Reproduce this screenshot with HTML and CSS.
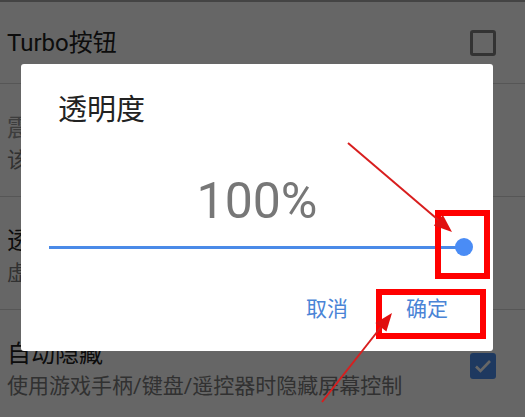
FILE: index.html
```html
<!DOCTYPE html>
<html lang="zh">
<head>
  <meta charset="UTF-8" />
  <title>透明度</title>
  <link rel="stylesheet" href="styles.css">
</head>
<body>
  <div class="settings">
    <div class="row row-single">
      <div class="row-text">
        <div class="row-title">Turbo按钮</div>
      </div>
      <span class="checkbox"></span>
    </div>
    <div class="row">
      <div class="row-text">
        <div class="row-title disabled">震动</div>
        <div class="row-summary">该功能需要设备支持震动</div>
      </div>
    </div>
    <div class="row">
      <div class="row-text">
        <div class="row-title">透明度</div>
        <div class="row-summary">虚拟按键的透明度</div>
      </div>
    </div>
    <div class="row">
      <div class="row-text">
        <div class="row-title">自动隐藏</div>
        <div class="row-summary">使用游戏手柄/键盘/遥控器时隐藏屏幕控制</div>
      </div>
      <span class="checkbox checked">
        <svg width="18" height="14" viewBox="0 0 18 14"><path d="M2 7.5l4.5 4.5L16 2" fill="none" stroke="#fff" stroke-width="2.6"/></svg>
      </span>
    </div>
  </div>

  <!-- 对话框 -->
  <div class="overlay">
    <div class="dialog">
      <div class="dialog-title">透明度</div>
      <div class="dialog-value">100%</div>
      <div class="slider">
        <div class="slider-track"></div>
        <div class="slider-thumb"></div>
      </div>
      <div class="dialog-actions">
        <span class="btn">取消</span>
        <span class="btn">确定</span>
      </div>
    </div>
  </div>

  <!-- 标注 -->
  <div class="mark mark-thumb"></div>
  <div class="mark mark-ok"></div>
  <svg class="arrows" width="525" height="417" viewBox="0 0 525 417">
    <line x1="348" y1="143" x2="443" y2="224" stroke="#d81e1e" stroke-width="2"/>
    <polygon points="452,232 433.8,225.6 442.9,215" fill="#e01010"/>
    <line x1="322" y1="402" x2="385" y2="322" stroke="#d81e1e" stroke-width="2"/>
    <polygon points="392,313 386.4,331.5 375.4,322.9" fill="#e01010"/>
  </svg>
</body>
</html>
```

FILE: styles.css
```css
body {
  margin: 0;
  font-family: Roboto, "Noto Sans CJK SC", sans-serif;
  background: #fff;
  overflow: hidden;
  height: 417px;
}

.settings {
  border-top: 2px solid #aaa;
}

.row {
  display: flex;
  align-items: center;
  height: 113px;
  box-sizing: border-box;
  padding: 0 29px 0 7px;
  border-bottom: 1px solid #d8d8d8;
}

.row-single {
  height: 82px;
}

.row-text {
  flex: 1;
  align-self: flex-start;
  padding-top: 28px;
}

.row-single .row-text {
  align-self: center;
  padding-top: 0;
}

.row-title {
  font-size: 24px;
  line-height: 32px;
  color: #222;
}

.row-title.disabled {
  color: #999;
}

.row-summary {
  margin-top: 3px;
  font-size: 21px;
  line-height: 27px;
  color: #7a7a7a;
}

.checkbox {
  width: 26px;
  height: 26px;
  box-sizing: border-box;
  border: 3px solid #808080;
  border-radius: 3px;
  display: flex;
  align-items: center;
  justify-content: center;
}

.checkbox.checked {
  border: none;
  background: #4c90f0;
}

.overlay {
  position: fixed;
  inset: 0;
  background: rgba(0, 0, 0, 0.6);
  padding: 64px 0 0 21px;
}

.dialog {
  width: 472px;
  height: 287px;
  box-sizing: border-box;
  background: #fff;
  border-radius: 3px;
  padding-top: 28px;
}

.dialog-title {
  padding-left: 37px;
  font-size: 29px;
  line-height: 36px;
  color: #222;
}

.dialog-value {
  margin-top: 45px;
  text-align: center;
  font-size: 50px;
  line-height: 56px;
  color: #777;
}

.slider {
  display: flex;
  align-items: center;
  margin-top: 9px;
  padding: 0 20px 0 28px;
  height: 18px;
}

.slider-track {
  flex: 1;
  height: 3px;
  background: #4a8ae8;
}

.slider-thumb {
  width: 18px;
  height: 18px;
  margin-left: -9px;
  border-radius: 50%;
  background: #4a8cf5;
}

.dialog-actions {
  display: flex;
  justify-content: flex-end;
  gap: 58px;
  margin-top: 39px;
  padding-right: 45px;
}

.btn {
  font-size: 21px;
  line-height: 28px;
  color: #4a84d6;
}

.mark {
  position: absolute;
  border: 6px solid #f00;
  box-sizing: border-box;
}

.mark-thumb {
  left: 435px;
  top: 210px;
  width: 55px;
  height: 69px;
}

.mark-ok {
  left: 376px;
  top: 289px;
  width: 110px;
  height: 50px;
}

.arrows {
  position: absolute;
  left: 0;
  top: 0;
}
```
